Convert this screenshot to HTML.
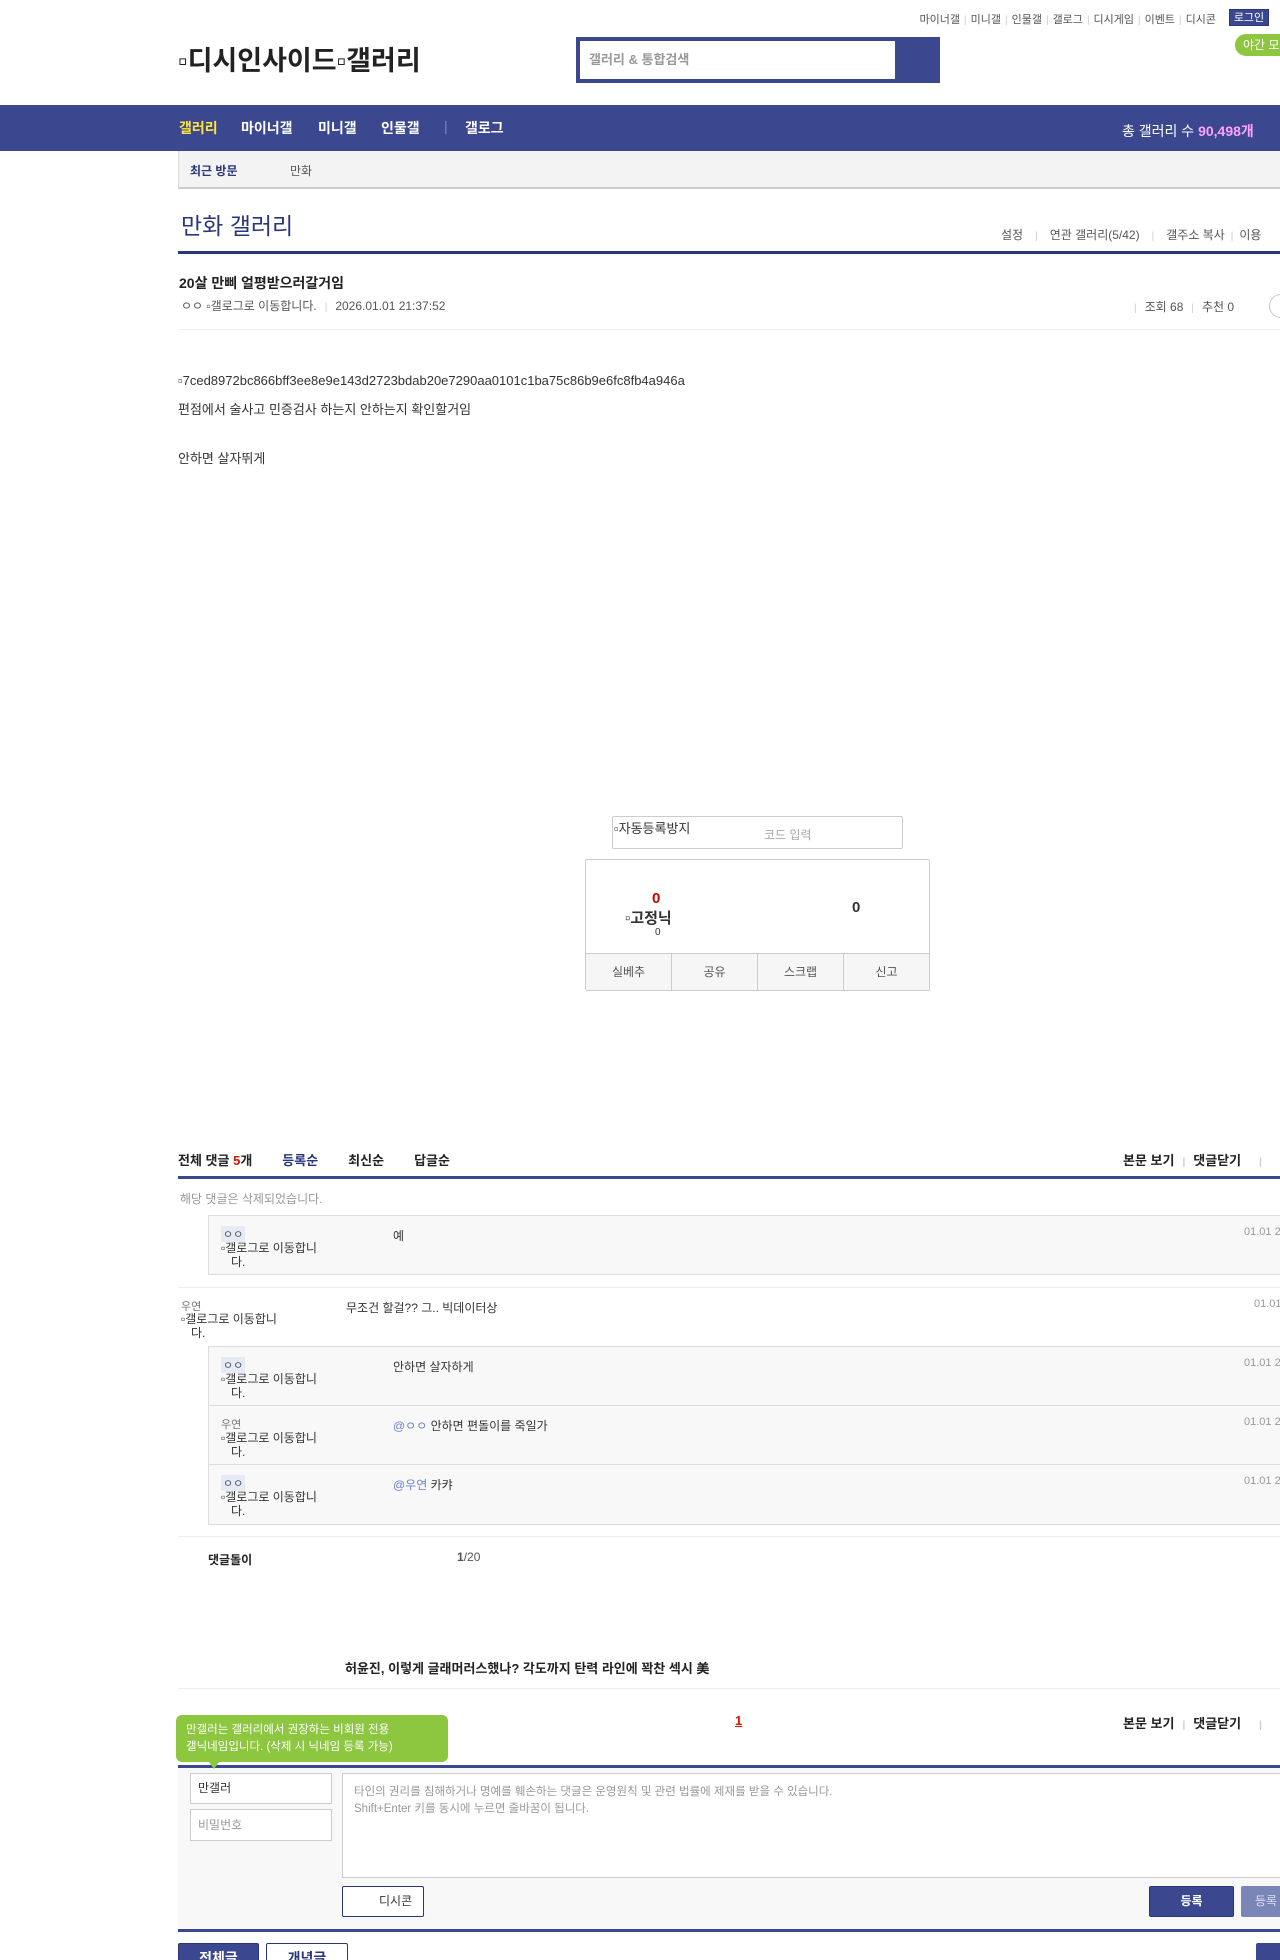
<!DOCTYPE html>
<html><head><meta charset="utf-8">
<style>
*{margin:0;padding:0;box-sizing:border-box}
html,body{width:1280px;height:1960px;overflow:hidden;background:#fff}
body{position:relative;font-family:"Liberation Sans","Noto Sans CJK KR",sans-serif;color:#333;font-size:13px}
.a{position:absolute;white-space:nowrap}
.nav{position:absolute;left:0;top:105px;width:1280px;height:46px;background:#3b4890}
.nav span{position:absolute;top:13px;color:#fff;font-weight:bold;font-size:14px}
.sep{color:#ccc;margin:0 4px;font-size:10px}
.line{position:absolute;left:178px;width:1102px}
.rbox{position:absolute;left:208px;width:1072px;background:#f8f8f8;border:1px solid #ddd;border-right:none}
.nick{font-size:11px;color:#777}
.nk{display:inline-block;background:#e5eaf7;color:#555;font-size:11px;padding:0 2px}
.gl{font-size:12px;color:#333;line-height:14px}
.dt{font-size:11px;color:#999}
</style></head><body>

<div class="a" style="right:64px;top:11px;font-size:11px;color:#555">마이너갤<span class="sep">|</span>미니갤<span class="sep">|</span>인물갤<span class="sep">|</span>갤로그<span class="sep">|</span>디시게임<span class="sep">|</span>이벤트<span class="sep">|</span>디시콘</div>
<div class="a" style="left:1229px;top:9px;width:40px;height:17px;background:#3b4890;color:#fff;font-size:11px;text-align:center;line-height:17px;border:1px solid #29367c">로그인</div>
<div class="a" style="left:1235px;top:34px;width:60px;height:22px;background:#8dc63f;border-radius:11px;color:#fff;font-size:12px;line-height:22px;padding-left:8px">야간 모드</div>

<div class="a" style="left:178px;top:39px;font-size:27px;font-weight:bold;color:#222">▫디시인사이드▫갤러리</div>

<div class="a" style="left:576px;top:37px;width:364px;height:46px;background:#3b4890"></div>
<div class="a" style="left:580px;top:41px;width:315px;height:38px;background:#fff;color:#999;font-size:13px;line-height:38px;padding-left:9px;font-weight:bold">갤러리 &amp; 통합검색</div>

<div class="nav">
<span style="left:179px;color:#ffe43b">갤러리</span>
<span style="left:241px">마이너갤</span>
<span style="left:318px">미니갤</span>
<span style="left:381px">인물갤</span>
<span style="left:444px;color:#7d88c0;font-weight:normal">|</span>
<span style="left:465px">갤로그</span>
<span style="left:1113px;top:16px;font-weight:normal;font-size:14px;left:1122px">총 갤러리 수 <b style="color:#ffa0ff">90,498개</b></span>
</div>

<div class="a" style="left:178px;top:151px;width:1102px;height:38px;background:#f3f3f3;border-bottom:2px solid #ccc;border-left:1px solid #ddd"></div>
<div class="a" style="left:190px;top:162px;font-size:12px;font-weight:bold;color:#29367c">최근 방문</div>
<div class="a" style="left:290px;top:162px;font-size:12px;color:#555">만화</div>

<div class="a" style="left:181px;top:207px;font-size:23px;color:#29367c">만화 갤러리</div>
<div class="a" style="left:1001px;top:226px;font-size:12px;color:#555">설정<span class="sep" style="margin:0 12px">|</span>연관 갤러리(5/42)<span class="sep" style="margin:0 12px">|</span>갤주소 복사<span class="sep" style="margin:0 6px">|</span>이용</div>
<div class="line" style="top:251px;height:3px;background:#29367c"></div>

<div class="a" style="left:179px;top:273px;font-size:14px;font-weight:bold;color:#222">20살 만삐 얼평받으러갈거임</div>
<div class="a" style="left:181px;top:297px;font-size:12px;color:#555">ㅇㅇ ▫갤로그로 이동합니다.<span class="sep" style="margin:0 8px">|</span>2026.01.01 21:37:52</div>
<div class="a" style="left:1134px;top:298px;font-size:12px;color:#555"><span class="sep" style="margin:0 8px 0 0">|</span>조회 68<span class="sep" style="margin:0 8px">|</span>추천 0</div>
<div class="a" style="left:1269px;top:294px;width:24px;height:24px;border:1px solid #ccc;border-radius:12px"></div>
<div class="line" style="top:329px;height:1px;background:#eee"></div>

<div class="a" style="left:178px;top:373px;font-size:13px;color:#333">▫7ced8972bc866bff3ee8e9e143d2723bdab20e7290aa0101c1ba75c86b9e6fc8fb4a946a</div>
<div class="a" style="left:178px;top:399px;font-size:13px">편점에서 술사고 민증검사 하는지 안하는지 확인할거임</div>
<div class="a" style="left:178px;top:448px;font-size:13px">안하면 살자뛰게</div>

<div class="a" style="left:612px;top:816px;width:291px;height:33px;border:1px solid #ccc;border-radius:2px"></div>
<div class="a" style="left:614px;top:818px;font-size:13px;color:#333">▫자동등록방지</div>
<div class="a" style="left:764px;top:826px;font-size:12px;color:#aaa">코드 입력</div>

<div class="a" style="left:585px;top:859px;width:345px;height:132px;border:1px solid #ccc;border-radius:2px"></div>
<div class="a" style="left:652px;top:890px;font-size:15px;font-weight:bold;color:#c00">0</div>
<div class="a" style="left:625px;top:907px;font-size:15px;font-weight:bold;color:#333">▫고정닉</div>
<div class="a" style="left:655px;top:927px;font-size:10px;color:#333">0</div>
<div class="a" style="left:852px;top:899px;font-size:15px;font-weight:bold;color:#333">0</div>
<div class="a" style="left:586px;top:953px;width:343px;height:37px;background:#f6f6f6;border-top:1px solid #ccc;display:flex">
<div style="flex:1;border-right:1px solid #ccc;text-align:center;line-height:36px;font-size:12px;color:#555">실베추</div>
<div style="flex:1;border-right:1px solid #ccc;text-align:center;line-height:36px;font-size:12px;color:#555">공유</div>
<div style="flex:1;border-right:1px solid #ccc;text-align:center;line-height:36px;font-size:12px;color:#555">스크랩</div>
<div style="flex:1;text-align:center;line-height:36px;font-size:12px;color:#555">신고</div>
</div>

<div class="a" style="left:178px;top:1150px;font-size:13px;font-weight:bold;color:#222">전체 댓글 <span style="color:#d31900">5</span>개<span style="margin-left:30px;color:#29367c">등록순</span><span style="margin-left:30px">최신순</span><span style="margin-left:30px">답글순</span></div>
<div class="a" style="left:1123px;top:1150px;font-size:13px;font-weight:bold;color:#222">본문 보기<span class="sep" style="margin:0 8px">|</span>댓글닫기<span class="sep" style="margin:0 18px">|</span></div>
<div class="line" style="top:1176px;height:3px;background:#3b4890"></div>
<div class="a" style="left:180px;top:1190px;font-size:12px;color:#999">해당 댓글은 삭제되었습니다.</div>

<div class="rbox" style="top:1215px;height:60px"></div>
<div class="a" style="left:221px;top:1226px"><span class="nk">ㅇㅇ</span></div>
<div class="a gl" style="left:221px;top:1241px">▫갤로그로 이동합니<br>&nbsp;&nbsp;&nbsp;다.</div>
<div class="a" style="left:393px;top:1227px;font-size:12px">예</div>
<div class="a dt" style="left:1244px;top:1226px">01.01 21</div>

<div class="line" style="top:1287px;height:1px;background:#eee"></div>
<div class="a nick" style="left:181px;top:1298px">우연</div>
<div class="a gl" style="left:181px;top:1312px">▫갤로그로 이동합니<br>&nbsp;&nbsp;&nbsp;다.</div>
<div class="a" style="left:346px;top:1299px;font-size:12px">무조건 할걸?? 그.. 빅데이터상</div>
<div class="a dt" style="left:1254px;top:1298px">01.01</div>

<div class="rbox" style="top:1346px;height:179px"></div>
<div class="a" style="left:208px;top:1405px;width:1072px;height:1px;background:#ddd"></div>
<div class="a" style="left:208px;top:1464px;width:1072px;height:1px;background:#ddd"></div>
<div class="a" style="left:221px;top:1357px"><span class="nk">ㅇㅇ</span></div>
<div class="a gl" style="left:221px;top:1372px">▫갤로그로 이동합니<br>&nbsp;&nbsp;&nbsp;다.</div>
<div class="a" style="left:393px;top:1358px;font-size:12px">안하면 살자하게</div>
<div class="a dt" style="left:1244px;top:1357px">01.01 21</div>
<div class="a nick" style="left:221px;top:1416px">우연</div>
<div class="a gl" style="left:221px;top:1431px">▫갤로그로 이동합니<br>&nbsp;&nbsp;&nbsp;다.</div>
<div class="a" style="left:393px;top:1417px;font-size:12px"><span style="color:#6b83c9">@ㅇㅇ</span> 안하면 편돌이를 죽일가</div>
<div class="a dt" style="left:1244px;top:1416px">01.01 21</div>
<div class="a" style="left:221px;top:1475px"><span class="nk">ㅇㅇ</span></div>
<div class="a gl" style="left:221px;top:1490px">▫갤로그로 이동합니<br>&nbsp;&nbsp;&nbsp;다.</div>
<div class="a" style="left:393px;top:1476px;font-size:12px"><span style="color:#6b83c9">@우연</span> 카캬</div>
<div class="a dt" style="left:1244px;top:1475px">01.01 21</div>

<div class="line" style="top:1536px;height:1px;background:#eee"></div>
<div class="a" style="left:208px;top:1551px;font-size:12px;font-weight:bold;color:#222">댓글돌이</div>
<div class="a" style="left:457px;top:1550px;font-size:12px;color:#555"><b>1</b>/20</div>

<div class="a" style="left:345px;top:1658px;font-size:13px;font-weight:bold;color:#222">허윤진, 이렇게 글래머러스했나? 각도까지 탄력 라인에 꽉찬 섹시 美</div>
<div class="line" style="top:1688px;height:1px;background:#eee"></div>

<div class="a" style="left:735px;top:1713px;font-size:13px;font-weight:bold;color:#d31900;text-decoration:underline">1</div>
<div class="a" style="left:1123px;top:1713px;font-size:13px;font-weight:bold;color:#222">본문 보기<span class="sep" style="margin:0 8px">|</span>댓글닫기<span class="sep" style="margin:0 18px">|</span></div>

<div class="line" style="top:1765px;height:3px;background:#3b4890"></div>
<div class="a" style="left:178px;top:1768px;width:1102px;height:161px;background:#f8f8f8"></div>
<div class="a" style="left:176px;top:1715px;width:272px;height:47px;background:#8dc63f;border-radius:6px;color:#fff;font-size:11.5px;line-height:17px;padding:7px 0 0 10px">만갤러는 갤러리에서 권장하는 비회원 전용<br>갤닉네임입니다. (삭제 시 닉네임 등록 가능)</div>
<div class="a" style="left:209px;top:1762px;width:0;height:0;border-left:5px solid transparent;border-right:5px solid transparent;border-top:7px solid #8dc63f"></div>
<div class="a" style="left:190px;top:1773px;width:142px;height:31px;background:#fff;border:1px solid #ccc;font-size:12px;color:#333;line-height:29px;padding-left:7px">만갤러</div>
<div class="a" style="left:190px;top:1809px;width:142px;height:32px;background:#fff;border:1px solid #ccc;font-size:12px;color:#999;line-height:30px;padding-left:7px">비밀번호</div>
<div class="a" style="left:342px;top:1773px;width:940px;height:105px;background:#fff;border:1px solid #ccc;font-size:11.5px;color:#999;line-height:17px;padding:10px 0 0 11px">타인의 권리를 침해하거나 명예를 훼손하는 댓글은 운영원칙 및 관련 법률에 제재를 받을 수 있습니다.<br>Shift+Enter 키를 동시에 누르면 줄바꿈이 됩니다.</div>
<div class="a" style="left:342px;top:1886px;width:82px;height:31px;background:#fff;border:1px solid #29367c;border-radius:2px;font-size:12px;color:#333;line-height:29px;padding-left:36px">디시콘</div>
<div class="a" style="left:1149px;top:1886px;width:85px;height:31px;background:#3b4890;border:1px solid #29367c;border-radius:2px;color:#fff;font-size:12px;font-weight:bold;text-align:center;line-height:29px">등록</div>
<div class="a" style="left:1241px;top:1886px;width:60px;height:31px;background:#7a85b8;border-radius:2px;color:#dde;font-size:12px;line-height:31px;padding-left:14px">등록</div>
<div class="line" style="top:1929px;height:3px;background:#3b4890"></div>

<div class="a" style="left:178px;top:1943px;width:81px;height:30px;background:#3b4890;border:1px solid #29367c;border-radius:2px;color:#fff;font-weight:bold;font-size:14px;text-align:center;line-height:28px">전체글</div>
<div class="a" style="left:266px;top:1943px;width:82px;height:30px;background:#fff;border:1px solid #29367c;border-radius:2px;color:#29367c;font-weight:bold;font-size:14px;text-align:center;line-height:28px">개념글</div>
<div class="a" style="left:1256px;top:1943px;width:60px;height:30px;background:#3b4890;border-radius:2px"></div>
</body></html>
